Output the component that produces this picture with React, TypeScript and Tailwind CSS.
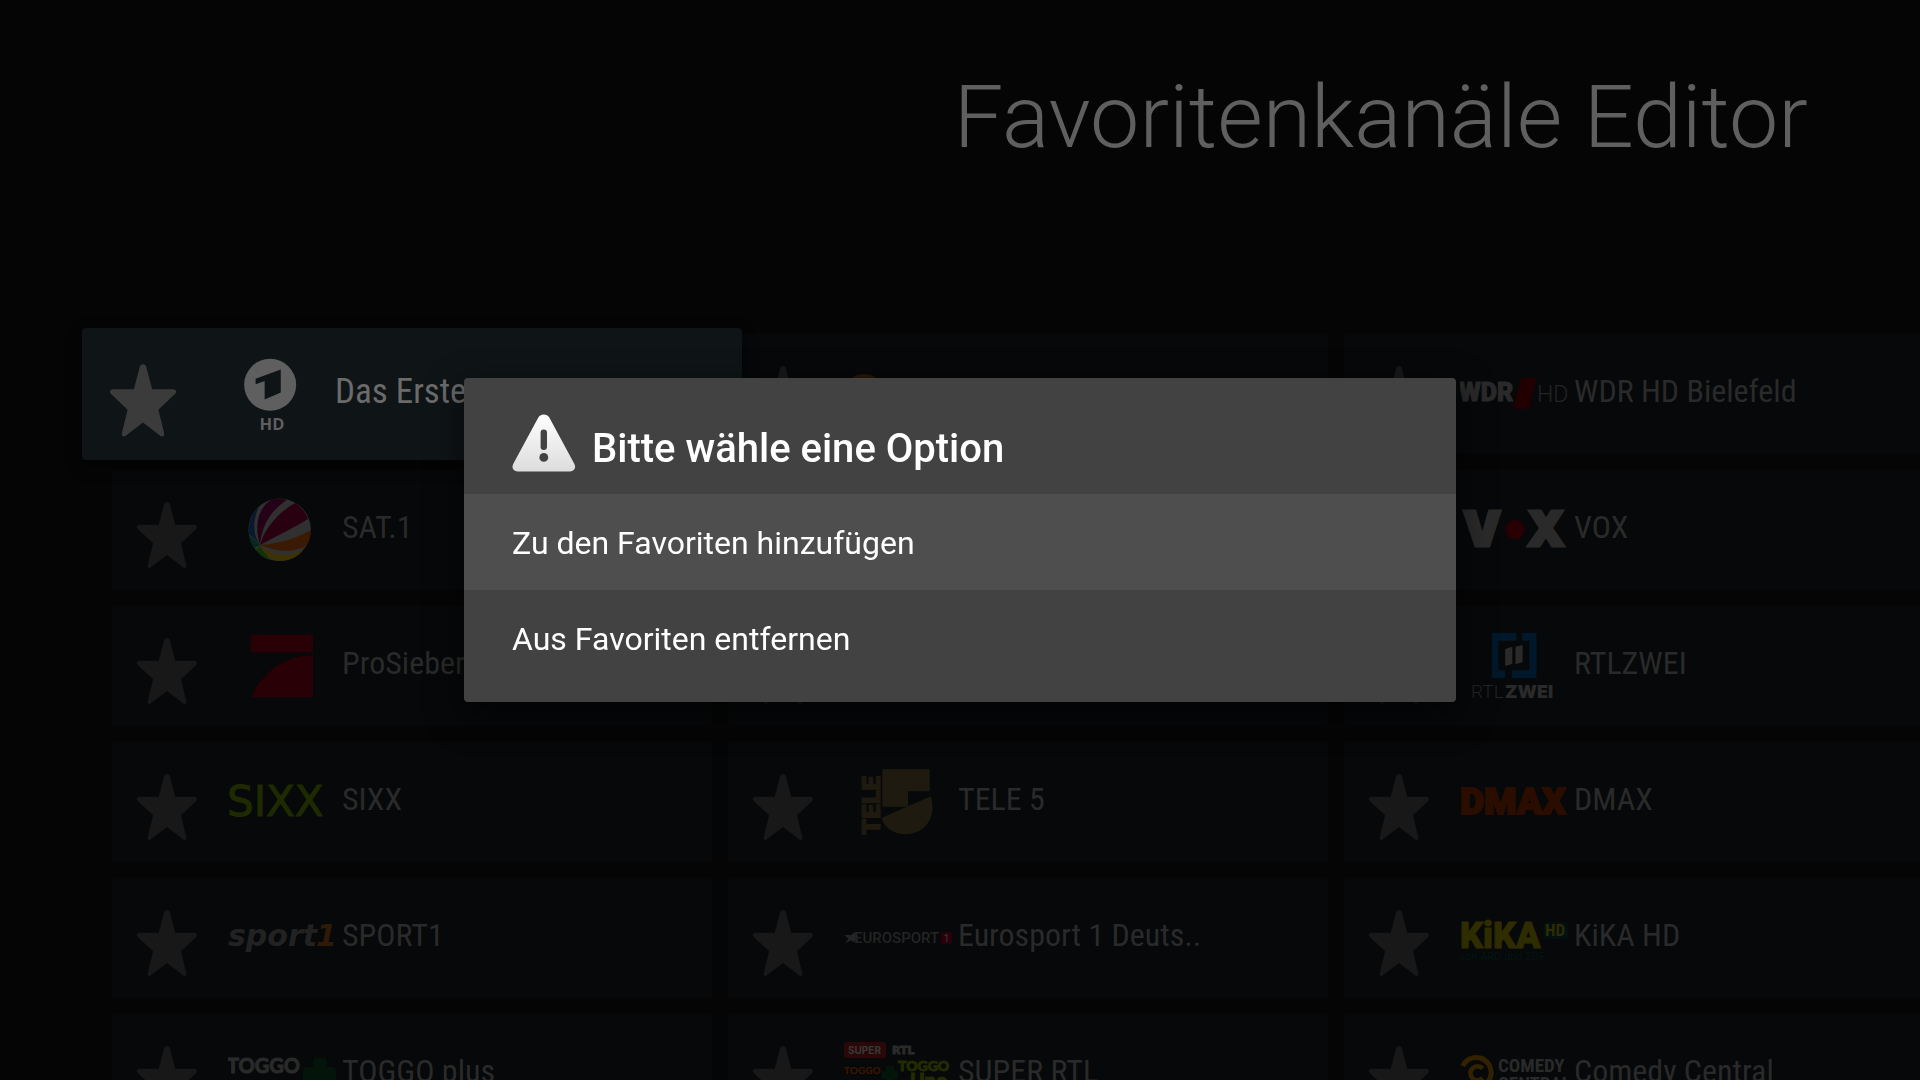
import { useState } from 'react'
import type { ReactNode } from 'react'

type Channel = {
  id: string
  name: string
  logo?: ReactNode
}

function StarIcon({ className }: { className: string }) {
  return (
    <svg viewBox="0 0 60 66" fill="currentColor" aria-hidden="true" className={className}>
      <path d="M30 0C31.6 0 32.6 1 33 2.5L38.3 22.7H57C60 22.7 61 25.2 59 27.2L44 41.3L49.3 63C49.6 65.5 47.6 66.5 46 65.2L30 53L14 65.2C12.4 66.5 10.4 65.5 10.7 63L16 41.3L1 27.2C-1 25.2 0 22.7 3 22.7H21.7L27 2.5C27.4 1 28.4 0 30 0Z" />
    </svg>
  )
}

function WarningIcon() {
  return (
    <svg viewBox="0 0 64 60" aria-hidden="true" className="h-15 w-16 shrink-0">
      <defs>
        <linearGradient id="warning" x1="0" y1="0" x2="0" y2="1">
          <stop offset="0" stopColor="#ffffff" />
          <stop offset="1" stopColor="#dcdcdc" />
        </linearGradient>
      </defs>
      <path
        fill="url(#warning)"
        d="M26.3 3.6C28.6 -0.7 35 -0.7 37.3 3.6L62.4 50C64.4 54 62 57.4 58 57.4H5.6C1.6 57.4 -0.8 54 1.2 50Z"
      />
      <rect x="28.6" y="15.6" width="6.4" height="20.4" rx="3.2" fill="#424242" />
      <circle cx="31.8" cy="43.4" r="4.4" fill="#424242" />
    </svg>
  )
}

const channels: Channel[] = [
  {
    id: 'ard',
    name: 'Das Erste',
    logo: (
      <>
        <circle cx="54.6" cy="35.2" r="23.6" fill="#5f5f5f" />
        <path d="M41.4 34.6V29.6L64.2 21.2V42.2L49.6 48.6V31.8Z" fill="#0f1416" />
        <text x="45" y="76" className="fill-[#5f5f5f] font-['Open_Sans',sans-serif] text-[15px] font-bold">HD</text>
      </>
    ),
  },
  {
    id: 'zdf',
    name: '',
    logo: <circle cx="20" cy="45" r="21" fill="#2b1703" />,
  },
  {
    id: 'wdr',
    name: 'WDR HD Bielefeld',
    logo: (
      <>
        <text x="-1" y="51" className="fill-[#2a2a2a] stroke-[#2a2a2a] font-[Roboto,sans-serif] text-[25px] font-black">WDR</text>
        <path d="M61.4 27.7H77.2L68.5 59H52.7Z" fill="#220002" />
        <text x="77" y="52" className="fill-[#242424] font-[Roboto,sans-serif] text-[23px] font-light">HD</text>
      </>
    ),
  },
  {
    id: 'sat1',
    name: 'SAT.1',
    logo: (
      <>
        <circle cx="51.6" cy="43.8" r="31.2" fill="#303030" />
        <path d="M32 58C25 50 24 36 31 20C23 27 20 40 21 48Z" fill="#08192f" />
        <path d="M32 59L21 49C21.6 54 23 58 26 62Z" fill="#06281c" />
        <path d="M32 60L28 64C32 70 38 73 42 74Z" fill="#12300a" />
        <path d="M32 58C27 45 28 22 44 13.4C48 12.4 54 12.6 59 13.8C42 25 34 40 32 58Z" fill="#240116" />
        <path d="M32 59C36 44 48 28 67 17C73 21 78 27 80 33C66 42 48 50 32 59Z" fill="#28000f" />
        <path d="M32 59C50 58 70 52 82.7 44C82.6 51 80.6 57 78 60C66 67 48 66 32 59Z" fill="#3a1a02" />
        <path d="M32 60C44 70 60 72 75 64.6C69 72 60 75 52 75C44 75 36 68 32 60Z" fill="#3d3202" />
      </>
    ),
  },
  { id: 'rtl', name: '' },
  {
    id: 'vox',
    name: 'VOX',
    logo: (
      <>
        <text x="3" y="60" className="fill-[#2a2a2a] stroke-[#2a2a2a] stroke-3 font-[Inter,sans-serif] text-[48px] font-black">V</text>
        <ellipse cx="55" cy="43.7" rx="9.6" ry="9.7" fill="#280004" />
        <text x="67" y="60" className="fill-[#2a2a2a] stroke-[#2a2a2a] stroke-3 font-[Inter,sans-serif] text-[48px] font-black">X</text>
      </>
    ),
  },
  {
    id: 'pro7',
    name: 'ProSieben',
    logo: <path d="M22.7 12.7H85V30.3H22.7ZM23 75.3C34 50 58 33 85 33V75.3Z" fill="#280006" />,
  },
  { id: 'kabel', name: '' },
  {
    id: 'rtl2',
    name: 'RTLZWEI',
    logo: (
      <>
        <path d="M31.8 11H56.3V18.7H38.5V48.3H45.2V56H31.8ZM62.2 11H76.5V56H52V48.3H69.3V18.7H62.2Z" fill="#00182b" />
        <path d="M45.2 27L52.3 24.7V42L45.2 44ZM55.5 24.7L62.6 23V40.3L55.5 42.3Z" fill="#2a2a2a" />
        <text x="11" y="76" className="fill-[#242424] font-[Roboto,sans-serif] text-[19px] font-light">RTL</text>
        <text x="45" y="76" className="fill-[#2a2a2a] font-[Inter,sans-serif] text-[18px] font-black">ZWEI</text>
      </>
    ),
  },
  {
    id: 'sixx',
    name: 'SIXX',
    logo: (
      <text x="-1" y="58" className="fill-[#1f2a00] stroke-[#1f2a00] font-['DejaVu_Sans',sans-serif] text-[42px]">SIXX</text>
    ),
  },
  {
    id: 'tele5',
    name: 'TELE 5',
    logo: (
      <>
        <text transform="translate(36 77) rotate(-90)" className="fill-[#1e1a10] stroke-[#1e1a10] font-[Inter,sans-serif] text-[24px] font-black">TELE</text>
        <path d="M38.3 11.3H85.7V33.3H64V48.7H38.3Z" fill="#1e1a10" />
        <path d="M37.3 60L86.7 38.3C93 56 83 76.3 61.7 76.3C50 76.3 40.5 70 37.3 60Z" fill="#1e1a10" />
      </>
    ),
  },
  {
    id: 'dmax',
    name: 'DMAX',
    logo: (
      <text x="0" y="56" className="fill-[#2b0d00] stroke-[#2b0d00] stroke-2 font-[Roboto,sans-serif] text-[37px] font-black">DMAX</text>
    ),
  },
  {
    id: 'sport1',
    name: 'SPORT1',
    logo: (
      <>
        <text x="0" y="52" className="fill-[#222222] font-['DejaVu_Sans',sans-serif] text-[30px] font-bold italic">sport</text>
        <text x="88" y="52" className="fill-[#2e1a06] font-['DejaVu_Sans',sans-serif] text-[30px] font-bold italic">1</text>
      </>
    ),
  },
  {
    id: 'eurosport',
    name: 'Eurosport 1 Deuts..',
    logo: (
      <>
        <path d="M0 41H7L11 38V41.4H14V43H11V45H14V46.4H9.6L11 49L6.6 46.6L1 49.4L4.4 44.6Z" fill="#242424" />
        <text x="10" y="49" className="fill-[#242424] font-[Roboto,sans-serif] text-[15px] font-medium">EUROSPORT</text>
        <rect x="97" y="38" width="11" height="12" rx="1" fill="#28000a" />
        <text x="99.5" y="48" className="fill-[#3a3a3a] font-[Roboto,sans-serif] text-[11px]">1</text>
      </>
    ),
  },
  {
    id: 'kika',
    name: 'KiKA HD',
    logo: (
      <>
        <text x="0" y="54" className="fill-[#2f2c00] stroke-[#2f2c00] font-[Roboto,sans-serif] text-[36px] font-black">KiKA</text>
        <rect x="84" y="28" width="24" height="17" rx="3" fill="#03100f" />
        <text x="85" y="42" className="fill-[#2f2c00] font-['Roboto_Condensed',Roboto,sans-serif] text-[17px] font-bold">HD</text>
        <text x="0" y="66" className="fill-[#031412] font-[Roboto,sans-serif] text-[11px]">von ARD und ZDF</text>
      </>
    ),
  },
  {
    id: 'toggoplus',
    name: 'TOGGO plus',
    logo: (
      <>
        <text x="-1" y="43" className="fill-[#2a2a2a] stroke-[#2a2a2a] font-[Lato,sans-serif] text-[20px] font-bold">TOGGO</text>
        <path d="M88 28H96Q99 28 99 31V37H105Q108 37 108 40V50Q108 53 105 53H99V62H85V53H78Q75 53 75 50V40Q75 37 78 37H85V31Q85 28 88 28Z" fill="#03140a" />
      </>
    ),
  },
  {
    id: 'superrtl',
    name: 'SUPER RTL',
    logo: (
      <>
        <rect x="0" y="12" width="42" height="16" rx="2" fill="#2b0808" />
        <text x="4" y="24" className="fill-[#383838] font-[Inter,sans-serif] text-[10px] font-bold">SUPER</text>
        <text x="48" y="24" className="fill-[#2a2a2a] stroke-[#2a2a2a] font-['DejaVu_Sans',sans-serif] text-[11px] font-bold">RTL</text>
        <text x="0" y="44" className="fill-[#3a1600] font-[Lato,sans-serif] text-[10px] font-black">TOGGO</text>
        <path d="M42 36H50V41H54V49H50V54H42V49H38V41H42Z" fill="#03140a" />
        <text x="54" y="41" className="fill-[#222c00] stroke-[#222c00] font-[Lato,sans-serif] text-[14px] font-black">TOGGO</text>
        <text x="66" y="58" className="fill-[#222c00] stroke-[#222c00] font-[Lato,sans-serif] text-[20px] font-black">Uno</text>
      </>
    ),
  },
  {
    id: 'comedy',
    name: 'Comedy Central',
    logo: (
      <>
        <path d="M2.6 36A15 15 0 1 1 17 57.4" fill="none" stroke="#332200" strokeWidth="5" />
        <path d="M22.6 38.6A7 7 0 1 0 22.6 48" fill="none" stroke="#332200" strokeWidth="4.6" />
        <text x="38" y="42" className="fill-[#2a2a2a] font-['Roboto_Condensed',Roboto,sans-serif] text-[19px] font-bold">COMEDY</text>
        <text x="38" y="60" className="fill-[#2a2a2a] font-['Roboto_Condensed',Roboto,sans-serif] text-[19px] font-bold">CENTRAL</text>
      </>
    ),
  },
]

const options = ['Zu den Favoriten hinzufügen', 'Aus Favoriten entfernen']

function ChannelCard({ channel, focused }: { channel: Channel; focused: boolean }) {
  return (
    <button
      type="button"
      aria-label={channel.name || channel.id}
      className={
        focused
          ? 'z-10 -mx-[30px] -my-[6px] flex h-[132px] items-center rounded bg-[#0f1416] pl-7 text-left shadow-[0_6px_14px_2px_rgba(0,0,0,0.4)]'
          : 'flex h-[120px] items-center rounded-sm bg-[#060809] pl-[25px] text-left'
      }
    >
      <StarIcon
        className={
          focused ? 'mt-3 h-[73px] w-[66px] shrink-0 text-[#3b3b3b]' : 'mt-2.5 h-[66px] w-[60px] shrink-0 text-[#181818]'
        }
      />
      <svg
        viewBox="0 0 108 88"
        aria-hidden="true"
        className={focused ? 'ml-[34px] h-[97px] w-[119px] shrink-0' : 'ml-[31px] h-[88px] w-[108px] shrink-0'}
      >
        {channel.logo}
      </svg>
      <span
        className={
          focused
            ? 'mb-1 ml-1.5 text-[35px] leading-10 whitespace-nowrap text-[#6b6b6b]'
            : 'mb-1.5 ml-1.5 text-[32px] leading-10 whitespace-nowrap text-[#2a2a2a]'
        }
      >
        {channel.name}
      </span>
    </button>
  )
}

export default function App() {
  const [selected, setSelected] = useState(0)

  return (
    <div className="h-screen overflow-hidden bg-[#050505] font-[Roboto,sans-serif]">
      <header className="px-28 pt-16 text-right">
        <h1 className="text-[88px] leading-[106px] font-light text-[#5f5f5f]">Favoritenkanäle Editor</h1>
      </header>

      <main className="mt-[164px] -mr-6 grid grid-cols-3 gap-4 pl-28 font-['Roboto_Condensed',Roboto,sans-serif]">
        {channels.map((channel, i) => (
          <ChannelCard key={channel.id} channel={channel} focused={i === 0} />
        ))}
      </main>

      <div className="fixed inset-0 z-20 flex items-center justify-center">
        <div
          role="dialog"
          aria-labelledby="dialog-title"
          className="w-[62rem] max-w-full overflow-hidden rounded bg-[#424242] pb-4 text-white shadow-[0_12px_32px_4px_rgba(0,0,0,0.5)]"
        >
          <div className="flex items-end gap-4 px-12 pt-9 pb-5">
            <WarningIcon />
            <h2 id="dialog-title" className="text-[40px] leading-[50px] font-medium">
              Bitte wähle eine Option
            </h2>
          </div>
          {options.map((option, i) => (
            <button
              key={option}
              type="button"
              onClick={() => setSelected(i)}
              className={`block h-24 w-full px-12 pt-0.5 text-left text-[32px] ${i === selected ? 'bg-[#4e4e4e]' : ''}`}
            >
              {option}
            </button>
          ))}
        </div>
      </div>
    </div>
  )
}
